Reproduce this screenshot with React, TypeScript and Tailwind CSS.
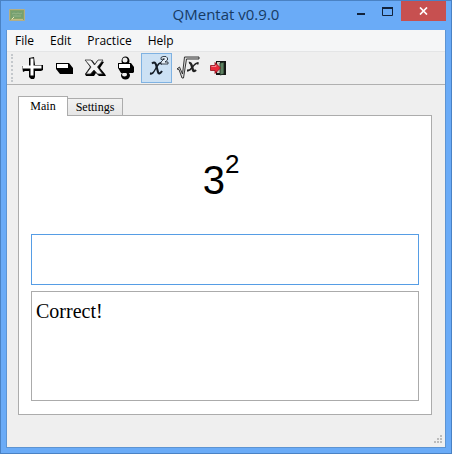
import { useState, type ReactNode } from "react";

type OperationId = "add" | "subtract" | "multiply" | "divide" | "square" | "root";
type TabId = "main" | "settings";

const MENUS = ["File", "Edit", "Practice", "Help"];

const TABS: { id: TabId; label: string }[] = [
  { id: "main", label: "Main" },
  { id: "settings", label: "Settings" },
];

const OPERATIONS: { id: OperationId; label: string; icon: ReactNode }[] = [
  { id: "add", label: "Addition", icon: <AddIcon /> },
  { id: "subtract", label: "Subtraction", icon: <SubtractIcon /> },
  { id: "multiply", label: "Multiplication", icon: <MultiplyIcon /> },
  { id: "divide", label: "Division", icon: <DivideIcon /> },
  { id: "square", label: "Square", icon: <SquareIcon /> },
  { id: "root", label: "Square root", icon: <RootIcon /> },
];

export default function App() {
  const [operation, setOperation] = useState<OperationId>("square");
  const [tab, setTab] = useState<TabId>("main");

  return (
    <div className="flex min-h-screen flex-col border border-[#4a82c4] bg-[#6aabf7] px-[5px] pb-[5px]">
      <TitleBar title="QMentat v0.9.0" />
      <div className="flex flex-1 flex-col border border-t-0 border-[#5d94d2] bg-[#efefef]">
        <MenuBar />
        <div
          role="toolbar"
          className="flex h-[34px] items-center border-t border-b border-t-[#e4e5e6] border-b-[#b0b0b0] pl-1"
        >
          <div className="mr-1 h-7 border-l-2 border-dotted border-[#c4c8cc]" />
          {OPERATIONS.map((op) => (
            <ToolButton
              key={op.id}
              label={op.label}
              active={op.id === operation}
              onClick={() => setOperation(op.id)}
            >
              {op.icon}
            </ToolButton>
          ))}
          <ToolButton label="Quit">
            <QuitIcon />
          </ToolButton>
        </div>

        <main className="flex flex-1 flex-col pt-2.5 pr-[13px] pl-[11px]">
          <div role="tablist" className="flex h-5 items-end">
            {TABS.map((t) => (
              <button
                key={t.id}
                role="tab"
                aria-selected={t.id === tab}
                onClick={() => setTab(t.id)}
                className={`border border-b-0 border-[#acacac] font-['Liberation_Serif',serif] text-[12px] leading-4 text-black ${
                  t.id === tab
                    ? "z-10 -mb-px h-5 w-[50px] bg-white pb-0.5"
                    : "-ml-px h-[17px] w-14 bg-linear-to-b from-[#f2f2f2] to-[#e6e6e6]"
                }`}
              >
                {t.label}
              </button>
            ))}
          </div>
          <div role="tabpanel" className="border border-[#acacac] bg-white px-3 pt-8 pb-[13px]">
            {tab === "main" && <PracticePanel />}
          </div>
        </main>

        <div className="flex h-8 items-end justify-end p-0.5">
          <SizeGrip />
        </div>
      </div>
    </div>
  );
}

function TitleBar({ title }: { title: string }) {
  return (
    <header className="grid h-[29px] grid-cols-[1fr_auto_1fr] items-start font-['Open_Sans',sans-serif]">
      <div className="pt-1.5 pl-[3px]">
        <AppIcon />
      </div>
      <h1 className="pt-[3px] text-[15px] leading-5 text-[#173a63]">{title}</h1>
      <div className="flex justify-end">
        <button aria-label="Minimize" className="flex h-5 w-[27px] items-center justify-center">
          <svg width="11" height="10" viewBox="0 0 11 10">
            <path d="M2 7h8v2H2z" fill="#12233c" />
          </svg>
        </button>
        <button aria-label="Maximize" className="flex h-5 w-[27px] items-center justify-center">
          <svg width="11" height="9" viewBox="0 0 11 9" fill="none">
            <path d="M.5 1v7.5h10V1" stroke="#12233c" />
            <path d="M0 0h11v2H0z" fill="#12233c" />
          </svg>
        </button>
        <button aria-label="Close" className="flex h-5 w-[45px] items-center justify-center bg-[#c75050]">
          <svg width="9" height="8" viewBox="0 0 9 8" fill="none">
            <path d="M1 .5l7 7M8 .5l-7 7" stroke="#fff" strokeWidth="1.7" />
          </svg>
        </button>
      </div>
    </header>
  );
}

function MenuBar() {
  return (
    <nav className="flex h-[21px] gap-4 bg-[#f5f6f7] px-2 font-['Open_Sans',sans-serif]">
      {MENUS.map((menu) => (
        <button key={menu} className="text-[12px] leading-5 text-black">
          {menu}
        </button>
      ))}
    </nav>
  );
}

function ToolButton({
  label,
  active,
  onClick,
  children,
}: {
  label: string;
  active?: boolean;
  onClick?: () => void;
  children: ReactNode;
}) {
  return (
    <button
      aria-label={label}
      aria-pressed={active}
      onClick={onClick}
      className={`flex h-[30px] w-[31px] items-center justify-center border ${
        active ? "border-[#7fb2e2] bg-[#cce1f4]" : "border-transparent"
      }`}
    >
      {children}
    </button>
  );
}

function PracticePanel() {
  return (
    <>
      <p className="flex h-[86px] justify-center pr-2 font-['Liberation_Sans',sans-serif] text-[40px] leading-[64px] text-black">
        3<sup className="top-0 text-[26px] leading-8">2</sup>
      </p>
      <input
        aria-label="Answer"
        type="text"
        className="block h-[51px] w-full border border-[#569de5] bg-white px-1 font-['Liberation_Serif',serif] text-[20px] outline-none"
      />
      <textarea
        aria-label="Result"
        readOnly
        value="Correct!"
        className="mt-1.5 block h-[110px] w-full resize-none border border-[#ababab] bg-white px-1 py-[7px] font-['Liberation_Serif',serif] text-[20px] leading-6 text-black outline-none"
      />
    </>
  );
}

function AppIcon() {
  return (
    <svg width="16" height="16" viewBox="0 0 16 16" fill="none">
      <path d="M.5 2.500h15v11H.5z" fill="#86a368" stroke="#b3ae86" />
      <path d="M2 4h12v7H2z" fill="#76a070" />
      <path d="M3 7l2-1 2 1 2-1 2 1 2-1M4 9h8" stroke="#94b587" />
      <path d="M2 12.500h12" stroke="#c2bc83" />
      <path d="M3 12l2-2" stroke="#e9e5b8" />
    </svg>
  );
}

function AddIcon() {
  return (
    <svg width="24" height="24" viewBox="0 0 24 24">
      <path d="M8 2l5-1 1 8h8v5l-2 1h-6v6l-1 2h-3l-2-2v-6H4l-2 1-1-6h7z" fill="#000" />
      <path d="M9.500 2.500h3v7h8v3h-8v7h-3v-7h-8v-3h8z" fill="#fff" />
    </svg>
  );
}

function SubtractIcon() {
  return (
    <svg width="24" height="24" viewBox="0 0 24 24">
      <path d="M4 7h13l4 5v6H8l-4-5z" fill="#000" />
      <path d="M5 8h11v4H5z" fill="#fff" />
    </svg>
  );
}

function MultiplyIcon() {
  return (
    <svg width="24" height="24" viewBox="0 0 24 24">
      <path d="M3 5l6-1 3 4 2-3h4l3 1-4 6 5 6 1 2h-7l-3-3-2 3H3l-1-2 5-7z" fill="#000" />
      <path
        d="M2 4h6l3.500 5 3.500-5h5l-5.500 7 5 7h-5l-3.500-4-3.500 4H3l5-7z"
        fill="#f2f2f2"
        stroke="#333"
        strokeWidth=".8"
      />
    </svg>
  );
}

function DivideIcon() {
  return (
    <svg width="24" height="26" viewBox="0 0 24 26">
      <ellipse cx="11.500" cy="6" rx="4" ry="4.500" fill="#000" />
      <ellipse cx="11" cy="5" rx="2.500" ry="2.500" fill="#eee" />
      <ellipse cx="11.500" cy="20.500" rx="4.500" ry="4" fill="#000" />
      <ellipse cx="10.500" cy="19.500" rx="2.500" ry="2" fill="#eee" />
      <path d="M4 8h13l3 4v5l-1 1H7l-3-5z" fill="#000" />
      <path d="M5 9h11v4H5z" fill="#fff" />
    </svg>
  );
}

function SquareIcon() {
  return (
    <svg width="25" height="26" viewBox="0 0 25 26" fill="none" stroke="#141c26">
      <path d="M8 8.500c2.500-2 3.500-.5 4 1l2 7.500c.5 2 2 2 4-1" strokeWidth="2.100" />
      <path d="M18 8.500c-2.500-1.500-4 1-6 4.500s-3 6.500-6 5.500" strokeWidth="1.400" />
      <path d="M16.500 8.500h1.500M6 18.500h1.500" strokeWidth="2" />
      <path d="M17 4.500v-2l2-1h3l1.500 1.500v2L21 7h3v2h-7V7l3-3z" fill="#e3edf6" strokeWidth=".8" />
      <path d="M19 4h2" strokeWidth=".8" />
    </svg>
  );
}

function RootIcon() {
  return (
    <svg width="26" height="26" viewBox="0 0 26 26" fill="none" stroke="#222">
      <path d="M2 14l2.500-2 3 7L9.500 2H24v2H11.500L8.500 23H7L4 14.500z" fill="#ddd" strokeWidth=".9" />
      <path d="M14 8c1.500-.5 2 .5 2.500 2l1.500 5c.5 1.500 1.500 1.500 3 0" strokeWidth="2.400" />
      <path d="M23.500 8c-2.500-.5-4.500 2-6 4s-3 4-5 3.500" strokeWidth="1.500" />
      <path d="M22 8.500h1.500M12 15.500h1.500" strokeWidth="2.200" />
    </svg>
  );
}

function QuitIcon() {
  return (
    <svg width="18" height="16" viewBox="0 0 18 16">
      <path d="M6 1h10v14H6z" fill="#151515" />
      <path d="M7 2h3v11H7z" fill="#c9cdc4" />
      <path d="M10 3l4-1v12l-4 1z" fill="#5d8060" stroke="#16231a" strokeWidth=".8" />
      <path d="M.5 5.500H5v-3L10.500 8 5 13.500v-3H.5z" fill="#e8293b" stroke="#8d0f1b" strokeWidth=".8" />
      <path d="M1.500 6.500H6l-.2-1.500" fill="none" stroke="#f69aa2" strokeWidth=".8" />
    </svg>
  );
}

function SizeGrip() {
  return (
    <svg width="10" height="10" viewBox="0 0 10 10" fill="#bcbcbc">
      <path d="M7 0h2v2H7zM4 3h2v2H4zM7 3h2v2H7zM1 6h2v2H1zM4 6h2v2H4zM7 6h2v2H7z" />
    </svg>
  );
}
